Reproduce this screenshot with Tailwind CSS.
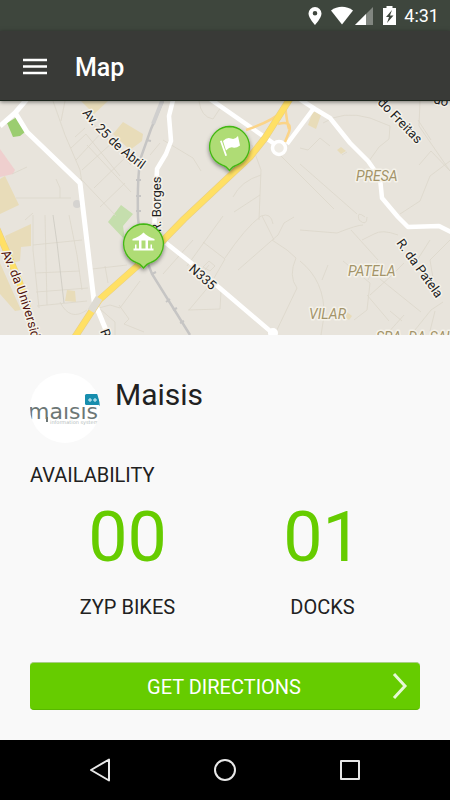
<!DOCTYPE html>
<html lang="en">
<head>
<meta charset="utf-8">
<meta name="viewport" content="width=device-width, initial-scale=1">
<title>Map</title>
<script src="https://cdn.jsdelivr.net/npm/@tailwindcss/browser@4"></script>
</head>
<body class="flex min-h-screen flex-col bg-[#f9f9f9] font-[Roboto,'Liberation_Sans',sans-serif] text-[#212121]">

<div class="flex h-[31px] items-center justify-end bg-[#3e463d] pr-[11px] text-white">
  <svg class="h-[31px] w-[100px]" viewBox="305 0 100 31" fill="#fff" aria-hidden="true">
    <path fill-rule="evenodd" d="M316 7a6.500 6.500 0 0 0-6.500 6.500C309.500 18 316 25 316 25s6.500-7 6.500-11.500A6.500 6.500 0 0 0 316 7zm0 4a2.300 2.300 0 1 1 0 4.600 2.300 2.300 0 0 1 0-4.600z"/>
    <path d="M332 10.500C338.500 5.500 347.500 5.500 354 10.500L343 24.500z"/>
    <path d="M374 7v18h-18z" opacity=".35"/><path d="M367 14v11h-11z"/>
    <path fill-rule="evenodd" d="M387.500 6h6v2h3.500v17h-13V8h3.500zM393 10l-6 7h3l-2 6 6.500-7.500h-3.500z"/>
  </svg>
  <time class="pt-px text-lg leading-5">4:31</time>
</div>

<header class="relative z-10 flex h-[70px] items-center gap-7 border-b border-[#1c251c] bg-[#393a37] px-[23px] pt-0.5 text-white shadow-[0_1px_4px_rgba(0,0,0,0.5)]">
  <button type="button" aria-label="Open menu">
    <svg class="block h-6 w-6" viewBox="0 0 24 24" stroke="#fff" stroke-width="2.400" aria-hidden="true"><path d="M0 5h24M0 11.500h24M0 18h24"/></svg>
  </button>
  <h1 class="pt-0.5 text-[25px] leading-8 font-medium">Map</h1>
</header>

<svg class="block h-[234px] w-full bg-[#e8e4dc]" viewBox="0 101 450 234" preserveAspectRatio="xMidYMid slice" role="img" aria-label="Map with two bike stations">
  <defs>
    <path id="abril" d="M82 113Q107 146 145 172"/>
    <path id="univ" d="M1 253Q21 292 37 360"/>
    <clipPath id="frame"><path d="M0 101h450v234H0z"/></clipPath>
    <filter id="shadow" x="-30%" y="-30%" width="160%" height="170%"><feDropShadow dx="0" dy="2" stdDeviation="2" flood-opacity=".45"/></filter>
    <g id="pin">
      <path d="M0-20.500A20 20 0 0 1 7 18.200Q3.500 19 0 23.500Q-3.500 19-7 18.200A20 20 0 0 1 0-20.500z" fill="#afdc75" stroke="#43b712" stroke-width="1.300"/>
    </g>
  </defs>
  <rect y="101" width="450" height="234" fill="#e8e4dc"/>
  <!-- blocks and parks -->
  <g fill="#e8dcb9">
    <path d="M81 101h27l-14 13zM123 122l20 12-1 7-12 9-17-16zM0 179l5-3 14 29-19 9zM5 236l26-12v22l-10 1-1 14-8 2zM0 263l21 47-6 1-15-17zM67 290l8 1 1 11-11-1zM313 111l8 4-5 14-8-4zM341 147l5 4-5 3-4-4zM347 312l5 4-3 4-3-2z"/>
  </g>
  <path d="M0 149l15 21-2 4-13 3z" fill="#efcfce"/>
  <path d="M7 123l10-6 8 15-5 4-7 1z" fill="#9bcd70"/>
  <path d="M121 205l12 9-10 12 2 14-17-18z" fill="#c5dead"/>
  <circle cx="77" cy="204" r="4" fill="#d5d3d0"/>
  <!-- minor streets -->
  <g fill="none" stroke="#dcd7ca" stroke-width=".8">
    <path d="M53 101l12 34 15 35 2 13M65 101l-4 20M81 110l50 55M75 137l10-9M71 148l15-14 34 42M76 160l26-28M82 170l31-28M94 188l34-33M87 145l44 47M80 178l36 38M16 198h55M12 174l15-7M100 207l25-24M56 179l4 9v10"/>
    <path d="M33 215v35l6 58M45 215l2 90M69 215l8 40 5 35M33 245l49-5M35 273l45-2M37 306l50-5M25 220l8-7M36 292l52-4M60 302q10 20 27 8M92 269l35-4M105 266l3 17M95 309l15-4 10 3 20-27M119 305l10 14-5 5 20 8M100 309l15 13v13" />
    <path d="M53 215l4 28 7 60" stroke="#ccc9c0"/>
    <path d="M199 101q2 16 14 18l8-12M163 140l30 18 8 13M150 155l10-12M259 220l2-50-9-25M261 175q-20 6-28 22M279 154l25 25 30 30M260 195l-26 17M163 274l30-34M223 216l-36 50M203 242l22 17M225 258q20-30 36-42 10-4 12 8M225 259l-15 26-21 25M188 310l32-1M220 309l1-18M238 270l40-35 6-12 10-6M262 216l12 24M272 240l15 10M287 250l9 8q-8 18 1 30l-22 46M209 265l-4 5M203 267l6-6 6 5-5 5z"/>
    <path d="M323 123q20-13 47-5l20 8-1 13-10 8-10 14M300 148l8 2 12-12 10 8M347 152l-5 3M300 164l57 50M365 217q-9-7-6 3 8 7 8-3M420 101l-1 25 31 45M418 120l13 20M419 165l12-14 19 20M400 214l20-13 10-25 20-15M300 230l37 3q20-8 26-8M351 230l27 30M362 240l12-6q8-5 24 1M300 261q25 20 24 55l-3 19M322 280l6-15M343 261l27 22-3 27-13 10M377 262l-9 18M370 295l20-18 14-14M380 279l41 33M367 295l22 26M430 240l-14 22M404 315l-18 20M390 311l12 10M411 335l20-25 12-8M435 311l-5 20M450 240l-20 20 3 18"/>
  </g>
  <!-- railway -->
  <g fill="none" stroke="#c6c5c4">
    <path d="M163 101l-12 28-10 28q-4 18-3 61l3 28 11 28 38 61" stroke-width="2.500"/>
    <path d="M162 101l-9 23" stroke-width="4" stroke="#d0cfce"/>
    <path d="M146 140l5 1M138 165l5 1M136 180h5M136 196h5M136 211h5M152 274l4-2M166 302l4-3M173 310l4-2M180 323l4-2" stroke-width="2"/>
  </g>
  <!-- white roads -->
  <g fill="none" stroke="#fff" stroke-linejoin="round">
    <path d="M27 99L15 113 0 126M16 114l11 18 53 51 2 17 12 101 14 34" stroke-width="5"/>
    <path d="M173 100l-4 16 2 25-5 13-9 15-3 64M210 99l66 46M287 144l27-36M298 98l17 11 15 9 20 25 18 18 12 17 2 20 16 19 10 10 31-1 12 6M166 243l24 19 25 22 61 52" stroke-width="4.500"/>
  </g>
  <circle cx="273" cy="333" r="5" fill="#fff"/>
  <!-- yellow roads -->
  <g fill="none" stroke-linejoin="round">
    <path d="M290 99l-6 11q-11 11-38 20M278 124q15-4 11 8l-4 10M285 105q2 18 4 24" stroke="#fbd488" stroke-width="2.500"/>
    <path d="M291 97l-26 41-15 19-66 62-40 41-45 40-26 40M-3 229l14 33q17 36 23 77" stroke="#e9cf83" stroke-width="7"/>
    <path d="M291 97l-26 41-15 19-66 62-40 41-45 40-26 40M-3 229l14 33q17 36 23 77" stroke="#ffe065" stroke-width="5.800"/>
    <path d="M99 298l-8 13" stroke="#dedbd3" stroke-width="7.500"/>
  </g>
  <circle cx="279" cy="148" r="6.500" fill="#eeebe4" stroke="#fff" stroke-width="3.500"/>
  <!-- labels -->
  <g clip-path="url(#frame)" class="font-[Roboto,'Liberation_Sans',sans-serif]" font-size="13" fill="#1d1d1d" stroke="#f5f2ea" stroke-width="3" stroke-linejoin="round" paint-order="stroke">
    <text><textPath href="#abril">Av. 25 de Abril</textPath></text>
    <text transform="translate(161 232) rotate(-90)">R. Borges</text>
    <text transform="translate(188 270) rotate(41)">N335</text>
    <text transform="translate(396 243) rotate(54)">R. da Patela</text>
    <text transform="translate(377 103) rotate(46)">do Freitas</text>
    <text transform="translate(433 103) rotate(14)">do</text>
    <text transform="translate(100 331) rotate(70)">R.</text>
    <text fill="#51150f"><textPath href="#univ">Av. da Universidade</textPath></text>
    <g font-size="14" font-style="italic" fill="#a39469">
      <text x="356" y="181">PRESA</text>
      <text x="348" y="276">PATELA</text>
      <text x="309" y="319">VILAR</text>
      <text x="376" y="342">SRA. DA SAÚDE</text>
    </g>
  </g>
  <!-- station pins -->
  <g transform="translate(229.500 147)">
    <use href="#pin" filter="url(#shadow)"/>
    <path d="M-9.500-6l1.700-.5 5.300 15-1.700.5zM-6.500-6q4-4 8-2.500t7-2.500l2 9.500q-4 3-7 2t-7 3z" fill="#fff"/>
  </g>
  <g transform="translate(143.500 244.500)">
    <use href="#pin" filter="url(#shadow)"/>
    <path d="M0-12q4 4 11 6.500v1.500h-22v-1.500Q-4-8 0-12zM-4.500-4h2.500v8h-2.500zM2-4h2.500v8H2zM-8.500 0h1.500v4h-1.500zM7 0h1.500v4H7zM-10 4h20v2h-20z" fill="#fff"/>
  </g>
</svg>

<main class="flex flex-1 flex-col px-[30px] pt-[38px] pb-[30px]">
  <div class="flex items-start gap-[15px]">
    <svg class="h-[70px] w-[70px] rounded-full bg-white" viewBox="0 0 70 70" role="img" aria-label="Maisis logo">
      <clipPath id="wordmark"><path d="M0 33h70v15H0z"/></clipPath>
      <text x="-2" y="46" clip-path="url(#wordmark)" font-family="DejaVu Sans" font-size="22" fill="#6d7776">maisis</text>
      <path d="M17 44v5" stroke="#6d7776" stroke-width="2"/>
      <text x="20" y="51" font-family="DejaVu Sans" font-size="5" fill="#b4bcbb">information systems</text>
      <rect x="55" y="21" width="14" height="11" rx="1.500" fill="#178eae"/>
      <path d="M66 30l4 3v-5z" fill="#178eae"/>
      <path d="M58 27h4M60 25v4M63 27h4M65 25v4" stroke="#d9f3fa"/>
    </svg>
    <h2 class="pt-1 text-3xl leading-9">Maisis</h2>
  </div>
  <h3 class="mt-5 text-xl leading-6">AVAILABILITY</h3>
  <dl class="grid grid-cols-2 text-center">
    <div class="flex flex-col-reverse gap-2">
      <dt class="text-xl leading-6">ZYP BIKES</dt>
      <dd class="text-[70px] leading-[100px] text-[#66cc00]">00</dd>
    </div>
    <div class="flex flex-col-reverse gap-2">
      <dt class="text-xl leading-6">DOCKS</dt>
      <dd class="text-[70px] leading-[100px] text-[#66cc00]">01</dd>
    </div>
  </dl>
  <button type="button" class="relative mt-auto h-12 w-full rounded-[4px] border-t border-b border-t-[#a9cd86] border-b-[#58b800] bg-[#66cc00] pt-0.5 pr-0.5 text-center text-xl leading-6 text-white">
    GET DIRECTIONS
    <svg class="absolute top-[10px] right-3 h-[26px] w-4" viewBox="0 0 16 26" fill="none" stroke="#e6f8d5" stroke-width="3" aria-hidden="true"><path d="M2 1l11 12L2 25"/></svg>
  </button>
</main>

<nav class="flex h-[60px] items-center justify-center gap-[99px] bg-black" aria-label="System navigation">
  <button type="button" aria-label="Back"><svg class="block h-[26px] w-[26px]" viewBox="0 0 26 26" fill="none" stroke="#e8e8e8" stroke-width="2" stroke-linejoin="round" aria-hidden="true"><path d="M22 2.500v21L4 13z"/></svg></button>
  <button type="button" aria-label="Home"><svg class="block h-[26px] w-[26px]" viewBox="0 0 26 26" fill="none" stroke="#e8e8e8" stroke-width="2" aria-hidden="true"><circle cx="13" cy="13" r="10"/></svg></button>
  <button type="button" aria-label="Recent apps"><svg class="block h-[26px] w-[26px]" viewBox="0 0 26 26" fill="none" stroke="#e8e8e8" stroke-width="2" stroke-linejoin="round" aria-hidden="true"><path d="M4 4h18v18H4z"/></svg></button>
</nav>
</body>
</html>
